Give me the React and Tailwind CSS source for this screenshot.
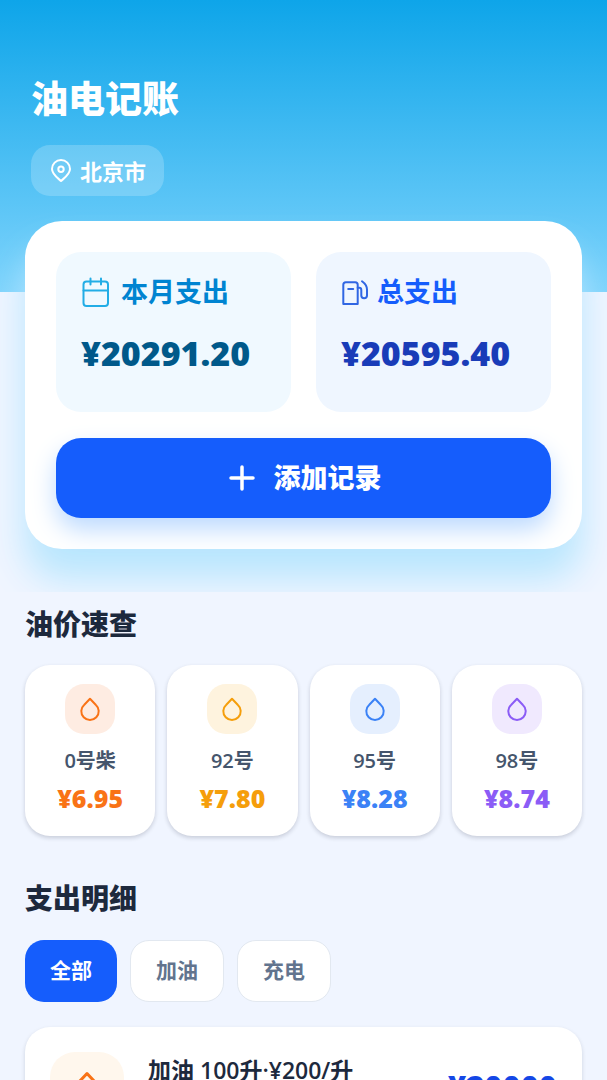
import { useState } from "react";

const PRICES = [
  { name: "0号柴", price: "6.95", text: "text-[#f97316]", bg: "bg-[#feece2]" },
  { name: "92号",  price: "7.80", text: "text-[#f59e0b]", bg: "bg-[#fef3de]" },
  { name: "95号",  price: "8.28", text: "text-[#3b82f6]", bg: "bg-[#e5effe]" },
  { name: "98号",  price: "8.74", text: "text-[#8b5cf6]", bg: "bg-[#f0e9fe]" },
];

const TABS = ["全部", "加油", "充电"];

const RECORDS = [
  { title: "加油 100升·¥200/升", amount: "20000" },
];

function PinIcon() {
  return (
    <svg className="w-6 h-6" viewBox="0 0 24 24" fill="none" stroke="currentColor" strokeWidth="2" strokeLinejoin="round" aria-hidden="true">
      <path d="M12 22C9 19.200 3 15.300 3 10a9 9 0 0 1 18 0c0 5.300-6 9.200-9 12z" />
      <circle cx="12" cy="10.200" r="2.700" />
    </svg>
  );
}

function CalendarIcon() {
  return (
    <svg className="w-7 h-8 text-[#22ade6]" viewBox="0 0 28 32" fill="none" stroke="currentColor" strokeWidth="2" strokeLinecap="round" aria-hidden="true">
      <rect x="2.500" y="5.500" width="24.500" height="24.500" rx="3" />
      <path d="M2.500 14.500h24.500M9.500 2.500v6M20 2.500v6" />
    </svg>
  );
}

function PumpIcon() {
  return (
    <svg className="w-7 h-8 text-[#3066e3]" viewBox="0 0 28 32" fill="none" stroke="currentColor" strokeWidth="2" strokeLinecap="round" strokeLinejoin="round" aria-hidden="true">
      <path d="M2.300 28V8.800a2.500 2.500 0 0 1 2.500-2.500h9.400a2.500 2.500 0 0 1 2.500 2.500V28zM7.200 13h5" />
      <path d="M16.700 11.700h1.500c1.500 0 2.100 1 2.100 2.300v5.500c0 3.600 5.700 3.600 5.700 0V13.500c0-3.500-2-6-5-8.200" />
    </svg>
  );
}

function DropIcon({ className }) {
  return (
    <svg className={className} viewBox="0 0 24 24" fill="none" stroke="currentColor" strokeWidth="2" strokeLinejoin="round" aria-hidden="true">
      <path d="M12 1.700l5.700 6a8.700 8.700 0 1 1-11.400 0z" />
    </svg>
  );
}

function PlusIcon() {
  return (
    <svg className="w-8 h-8" viewBox="0 0 32 32" fill="none" stroke="currentColor" strokeWidth="3.500" strokeLinecap="round" aria-hidden="true">
      <path d="M16 5v22M5 16h22" />
    </svg>
  );
}

export default function App() {
  const [tab, setTab] = useState("全部");

  return (
    <div className="h-screen overflow-hidden bg-[#f0f5ff] font-['Open_Sans','Noto_Sans_CJK_SC',sans-serif]">
      {/* Header + summary */}
      <header className="overflow-hidden px-[25px] pt-[71px] pb-[43px] bg-[linear-gradient(to_bottom,#0ea5e9,#7dd3fc)] bg-[length:100%_292px] bg-no-repeat">
        <h1 className="px-[6px] text-[37px] leading-[56px] font-black text-white">油电记账</h1>
        <button className="mt-[18px] ml-[6px] h-[51px] px-[18px] rounded-[19px] bg-white/20 text-white flex items-center gap-[7px] text-[22px] leading-8 font-bold">
          <PinIcon />
          北京市
        </button>

        <section className="mt-[25px] p-[31px] rounded-[37px] bg-white shadow-[0_30px_37px_#b8e6fe]">
          <div className="grid grid-cols-2 gap-[25px]">
            <div className="h-40 px-[25px] pt-5 rounded-[25px] bg-[#f0f9ff]">
              <div className="flex items-center gap-3 text-[27px] leading-10 font-bold text-[#0084d1]">
                <CalendarIcon />
                本月支出
              </div>
              <p className="mt-4 text-[34px] leading-[50px] font-extrabold text-[#00598a]">¥20291.20</p>
            </div>
            <div className="h-40 px-[25px] pt-5 rounded-[25px] bg-[#eff6ff]">
              <div className="flex items-center gap-2 text-[27px] leading-10 font-bold text-[#155dfc]">
                <PumpIcon />
                总支出
              </div>
              <p className="mt-4 text-[34px] leading-[50px] font-extrabold text-[#193cb8]">¥20595.40</p>
            </div>
          </div>
          <button className="mt-[26px] w-full h-20 rounded-[25px] bg-[#155dfc] text-white flex items-center justify-center gap-4 text-[27px] font-black shadow-[0_12px_25px_#bedbff]">
            <PlusIcon />
            添加记录
          </button>
        </section>
      </header>

      <main className="px-[25px]">
        {/* Fuel prices */}
        <section className="pt-3">
          <h2 className="text-[28px] leading-10 font-black text-[#1d293d]">油价速查</h2>
          <div className="mt-[21px] grid grid-cols-4 gap-3">
            {PRICES.map(p => (
              <div key={p.name} className="h-[171px] pt-[19px] rounded-[25px] bg-white flex flex-col items-center shadow-[0_2px_4px_rgba(15,23,43,0.18)]">
                <div className={`w-[50px] h-[50px] rounded-[19px] flex items-center justify-center ${p.bg}`}>
                  <DropIcon className={`w-6 h-6 ${p.text}`} />
                </div>
                <span className="mt-[11px] text-[20px] leading-8 font-semibold text-[#45556c]">{p.name}</span>
                <span className={`mt-[3px] text-[25px] leading-9 font-extrabold ${p.text}`}>¥{p.price}</span>
              </div>
            ))}
          </div>
        </section>

        {/* Records */}
        <section className="pt-[42px]">
          <h2 className="text-[28px] leading-10 font-black text-[#1d293d]">支出明细</h2>
          <div className="mt-[22px] flex items-center gap-[13px]">
            {TABS.map(t => (
              <button key={t} onClick={() => setTab(t)}
                className={`h-[62px] px-[25px] rounded-[19px] text-[21px] ${tab===t ? "bg-[#155dfc] text-white font-bold" : "bg-white border border-[#e2e8f0] text-[#62748e] font-semibold"}`}>
                {t}
              </button>
            ))}
          </div>
          <ul className="mt-[25px]">
            {RECORDS.map(r => (
              <li key={r.title} className="p-[25px] rounded-[25px] bg-white flex items-start gap-6 shadow-[0_2px_4px_rgba(15,23,43,0.15)]">
                <div className="w-[74px] h-[74px] rounded-[25px] bg-[#fff7ed] flex items-center justify-center">
                  <DropIcon className="w-9 h-9 text-[#f97316]" />
                </div>
                <p className="flex-1 text-[23px] leading-9 font-semibold text-[#1d293d]">{r.title}</p>
                <span className="text-[31px] leading-[70px] font-extrabold text-[#1447e6]">¥{r.amount}</span>
              </li>
            ))}
          </ul>
        </section>
      </main>
    </div>
  );
}
